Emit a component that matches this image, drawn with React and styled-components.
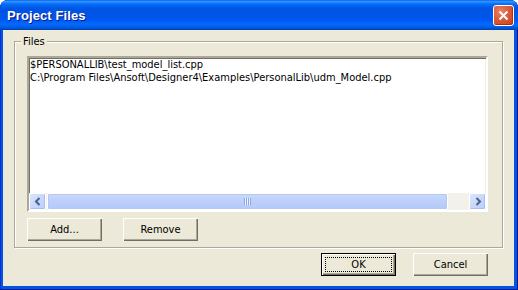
import React from 'react';
import styled, { createGlobalStyle } from 'styled-components';

const uiFont = '"DejaVu Sans Condensed", "Liberation Sans", Arial, sans-serif';

const GlobalStyle = createGlobalStyle`
  html, body {
    margin: 0;
    padding: 0;
    background: #ffffff;
  }
  body {
    font-family: ${uiFont};
    font-size: 11px;
  }
`;

const Styled = {
  Window: styled.div`
    display: flex;
    flex-direction: column;
    width: 518px;
    height: 290px;
    box-sizing: border-box;
    background: #0653e0;
    border-radius: 8px 8px 0 0;
    box-shadow: inset 0 -1px 0 #001d9a, inset -1px 0 0 #00138c, inset 1px 0 0 #0831d9;
    overflow: hidden;
  `,

  TitleBar: styled.div`
    display: flex;
    align-items: flex-start;
    justify-content: space-between;
    height: 30px;
    flex-shrink: 0;
    padding: 0 4px 0 7px;
    box-sizing: border-box;
    border-radius: 8px 8px 0 0;
    background: linear-gradient(to bottom,
      #0058ee 0%, #3593ff 4%, #288eff 7%, #127dff 10%, #036ffc 14%,
      #0262ee 20%, #0057e5 27%, #0054e3 33%, #0055eb 60%, #005bf5 70%,
      #026afe 80%, #0062ef 88%, #0052d6 94%, #0040ab 100%);
  `,

  Title: styled.span`
    margin-top: 8px;
    font-family: "Liberation Sans", Arial, sans-serif;
    font-weight: bold;
    font-size: 13px;
    color: #ffffff;
    text-shadow: 1px 1px 0 #0a1883;
    letter-spacing: 0.1px;
  `,

  CloseButton: styled.button`
    display: flex;
    align-items: center;
    justify-content: center;
    width: 21px;
    height: 21px;
    margin-top: 5px;
    padding: 0;
    border: 1px solid #ffffff;
    border-radius: 3px;
    background: radial-gradient(circle at 35% 30%, #e9856b 0%, #dc5a3a 45%, #c8401c 100%);
    box-shadow: inset -1px -1px 0 #a8310f;
  `,

  Body: styled.div`
    flex: 1;
    display: flex;
    flex-direction: column;
    margin: 0 4px 4px 3px;
    padding: 11px 11px 0 11px;
    background: #ece9d8;
  `,

  GroupBox: styled.div`
    position: relative;
    display: flex;
    flex-direction: column;
    height: 207px;
    box-sizing: border-box;
    padding: 14px 13px 0 12px;
    border: 1px solid #aca899;
    box-shadow: inset 1px 1px 0 #ffffff, 1px 1px 0 #ffffff;
  `,

  Legend: styled.span`
    position: absolute;
    top: -7px;
    left: 6px;
    padding: 0 2px;
    background: #ece9d8;
    color: #000000;
    line-height: 13px;
  `,

  ListBox: styled.div`
    display: flex;
    flex-direction: column;
    width: 461px;
    height: 156px;
    box-sizing: border-box;
    border-style: solid;
    border-width: 2px;
    border-color: #aca899 #ffffff #ffffff #aca899;
    background: #ffffff;
    box-shadow: inset 1px 1px 0 #716f64, inset -1px -1px 0 #f1efe2;
  `,

  Items: styled.div`
    flex: 1;
    padding: 0 0 0 1px;
    overflow: hidden;
  `,

  Item: styled.div`
    line-height: 13px;
    color: #000000;
    white-space: nowrap;
  `,

  HScroll: styled.div`
    display: flex;
    height: 17px;
    background: #f3f1ec;
    flex-shrink: 0;
  `,

  ArrowButton: styled.div`
    display: flex;
    align-items: center;
    justify-content: center;
    width: 17px;
    height: 17px;
    box-sizing: border-box;
    border: 1px solid #ffffff;
    border-radius: 2px;
    background: linear-gradient(to bottom right, #dbe5fd, #b8cdfa);
    box-shadow: inset -1px -1px 0 #a8bef2;
  `,

  Track: styled.div`
    flex: 1;
    display: flex;
    padding: 0 21px 0 1px;
  `,

  Thumb: styled.div`
    flex: 1;
    display: flex;
    align-items: center;
    justify-content: center;
    box-sizing: border-box;
    border: 1px solid #ffffff;
    border-radius: 2px;
    background: linear-gradient(to bottom, #cad9fd, #bccffb 50%, #b4c9f9);
    box-shadow: inset 0 0 0 1px #b3c8f7;
  `,

  Grip: styled.div`
    width: 7px;
    height: 7px;
    background: repeating-linear-gradient(to right, #8ca5e6 0 1px, #eef3ff 1px 2px);
  `,

  ButtonRow: styled.div`
    display: flex;
    gap: 21px;
    margin-top: 6px;
  `,

  Footer: styled.div`
    display: flex;
    justify-content: flex-end;
    gap: 17px;
    margin-top: 5px;
    padding-right: 15px;
  `,

  Button: styled.button`
    position: relative;
    width: 75px;
    height: 23px;
    box-sizing: border-box;
    padding: 0;
    font-family: ${uiFont};
    font-size: 11px;
    color: #000000;
    background: #ece9d8;
    border-style: solid;
    border-width: ${props => (props.$default ? '1px' : '0')};
    border-color: #000000;
    box-shadow: inset 1px 1px 0 #ffffff, inset -1px -1px 0 #716f64, inset -2px -2px 0 #aca899;
  `,

  Focus: styled.span`
    position: absolute;
    inset: 3px;
    border: 1px dotted #000000;
  `
};

const ChevronLeft = () => (
  <svg width="8" height="9" viewBox="0 0 8 9">
    <path d="M5.5 1 L2 4.5 L5.5 8" fill="none" stroke="#4d6185" strokeWidth="2" />
  </svg>
);

const ChevronRight = () => (
  <svg width="8" height="9" viewBox="0 0 8 9">
    <path d="M2.5 1 L6 4.5 L2.5 8" fill="none" stroke="#4d6185" strokeWidth="2" />
  </svg>
);

const CloseIcon = () => (
  <svg width="11" height="11" viewBox="0 0 11 11">
    <path d="M1.5 1.5 L9.5 9.5 M9.5 1.5 L1.5 9.5" stroke="#ffffff" strokeWidth="2" />
  </svg>
);

const files = [
  '$PERSONALLIB\\test_model_list.cpp',
  'C:\\Program Files\\Ansoft\\Designer4\\Examples\\PersonalLib\\udm_Model.cpp'
];

const App = () => {
  return (
    <>
      <GlobalStyle />
      <Styled.Window>
        <Styled.TitleBar>
          <Styled.Title>Project Files</Styled.Title>
          <Styled.CloseButton type="button">
            <CloseIcon />
          </Styled.CloseButton>
        </Styled.TitleBar>
        <Styled.Body>
          <Styled.GroupBox>
            <Styled.Legend>Files</Styled.Legend>
            <Styled.ListBox>
              <Styled.Items>
                {files.map(f => (
                  <Styled.Item key={f}>{f}</Styled.Item>
                ))}
              </Styled.Items>
              <Styled.HScroll>
                <Styled.ArrowButton>
                  <ChevronLeft />
                </Styled.ArrowButton>
                <Styled.Track>
                  <Styled.Thumb>
                    <Styled.Grip />
                  </Styled.Thumb>
                </Styled.Track>
                <Styled.ArrowButton>
                  <ChevronRight />
                </Styled.ArrowButton>
              </Styled.HScroll>
            </Styled.ListBox>
            <Styled.ButtonRow>
              <Styled.Button type="button">Add...</Styled.Button>
              <Styled.Button type="button">Remove</Styled.Button>
            </Styled.ButtonRow>
          </Styled.GroupBox>
          <Styled.Footer>
            <Styled.Button type="button" $default>
              <Styled.Focus />
              OK
            </Styled.Button>
            <Styled.Button type="button">Cancel</Styled.Button>
          </Styled.Footer>
        </Styled.Body>
      </Styled.Window>
    </>
  );
};

export default App;
